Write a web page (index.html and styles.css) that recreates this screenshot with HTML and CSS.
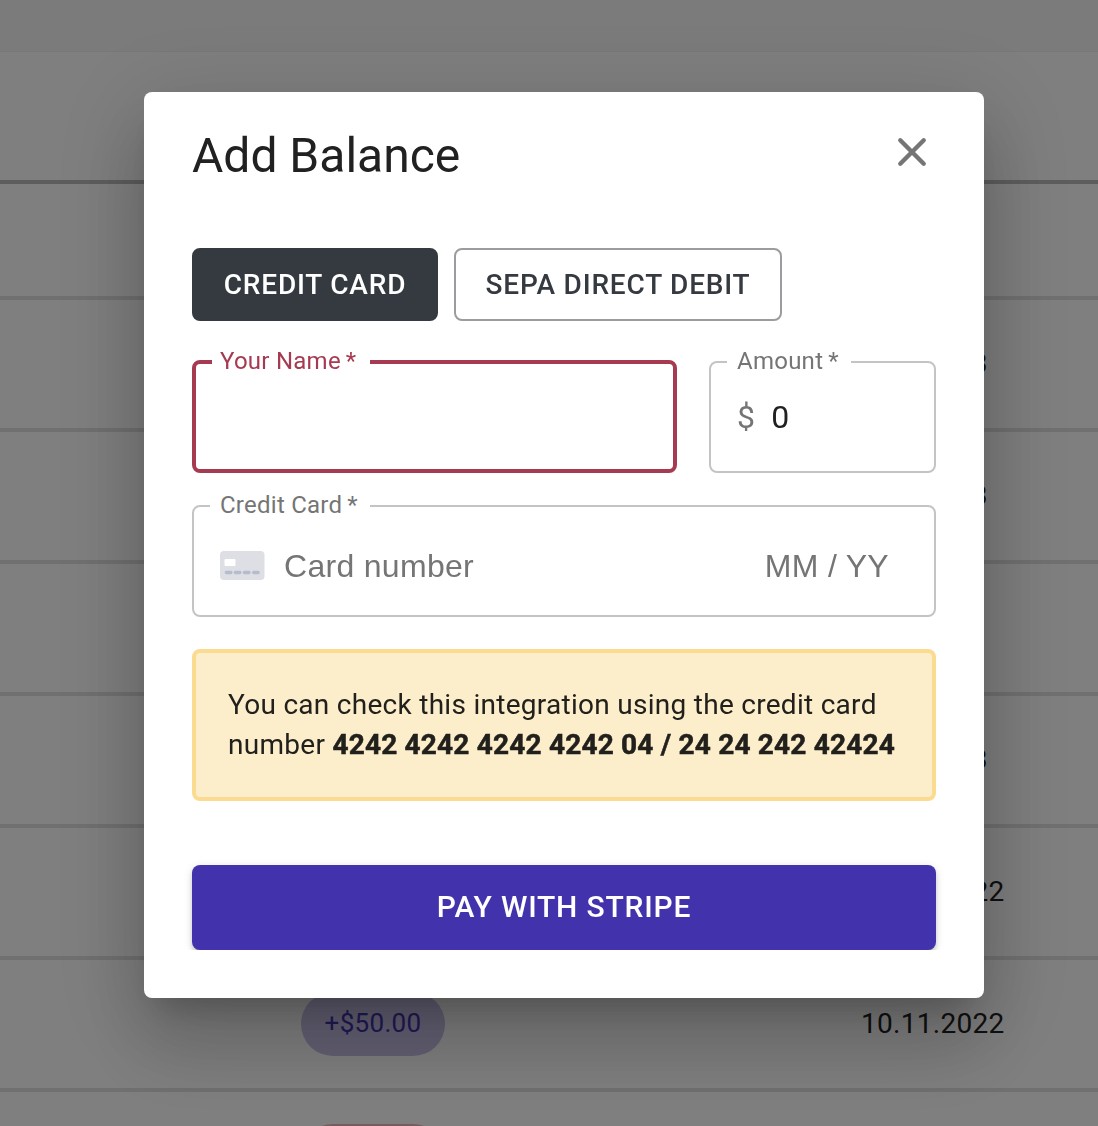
FILE: index.html
```html
<!DOCTYPE html>
<html lang="en">
<head>
  <meta charset="UTF-8">
  <title>Add Balance</title>
  <link rel="stylesheet" href="styles.css">
</head>
<body>
  <main class="page">
    <div class="topbar"></div>
    <div class="table">
      <div class="row row-head"></div>
      <div class="row row-first"></div>
      <div class="row"><span class="date date-strong">3</span></div>
      <div class="row"><span class="date date-strong">3</span></div>
      <div class="row"></div>
      <div class="row"><span class="date date-strong">3</span></div>
      <div class="row"><span class="date">10.11.2022</span></div>
      <div class="row"><span class="chip">+$50.00</span><span class="date">10.11.2022</span></div>
      <div class="row"><span class="chip chip-red"></span></div>
    </div>
  </main>

  <div class="backdrop">
    <section class="modal" role="dialog" aria-labelledby="title">
      <header class="modal-head">
        <h2 id="title">Add Balance</h2>
        <button class="close" type="button" aria-label="Close">
          <svg width="48" height="48" viewBox="0 0 48 48" fill="none" stroke="#757575" stroke-width="4.4" stroke-linecap="round">
            <path d="M12.3 12.3L35.7 35.7M35.7 12.3L12.3 35.7"/>
          </svg>
        </button>
      </header>

      <div class="tabs">
        <button class="tab tab-active" type="button">CREDIT CARD</button>
        <button class="tab" type="button">SEPA DIRECT DEBIT</button>
      </div>

      <form>
        <div class="fields">
          <div class="field field-name">
            <label class="label">Your Name<span class="star">*</span></label>
          </div>
          <div class="field field-amount">
            <label class="label">Amount<span class="star">*</span></label>
            <span class="currency">$</span>
            <span class="value">0</span>
          </div>
        </div>

        <div class="field field-card">
          <label class="label">Credit Card<span class="star">*</span></label>
          <svg class="card-icon" width="45" height="29" viewBox="0 0 45 29">
            <rect width="44.5" height="29" rx="4" fill="#dedfe5"/>
            <rect x="4.5" y="8" width="11" height="7" rx="1" fill="#fff"/>
            <g fill="#b5bccb">
              <rect x="4.7" y="19.8" width="7.8" height="3.4" rx="1.7"/>
              <rect x="13.7" y="19.8" width="7.8" height="3.4" rx="1.7"/>
              <rect x="22.8" y="19.8" width="7.8" height="3.4" rx="1.7"/>
              <rect x="32" y="19.8" width="7.8" height="3.4" rx="1.7"/>
            </g>
          </svg>
          <span class="card-number">Card number</span>
          <span class="card-date">MM / YY</span>
        </div>

        <p class="notice">You can check this integration using the credit card<br>number <strong>4242 4242 4242 4242 04 / 24 24 242 42424</strong></p>

        <div class="actions">
          <button class="pay" type="button">PAY WITH STRIPE</button>
        </div>
      </form>
    </section>
  </div>
</body>
</html>
```
FILE: styles.css
```css
* { box-sizing: border-box; }
body { margin: 0; height: 1126px; overflow: hidden; font-family: Roboto, "Liberation Sans", sans-serif; color: #212121; }
button { font-family: inherit; border: 0; padding: 0; }

/* page behind the dialog */
.page { height: 1126px; overflow: hidden; background: #fff; }
.topbar { height: 52px; background: #f6f6f6; border-bottom: 1px solid #f1f1f1; }
.row { display: grid; grid-template-columns: 560px 1fr; align-items: center; height: 132px; padding-left: 301px; border-bottom: 4px solid #e0e0e0; }
.row-head { border-color: #bbb; }
.row-first { height: 116px; }
.date { grid-column: 2; padding-bottom: 2px; font-size: 28px; letter-spacing: 0.3px; }
.date-strong { padding-left: 110px; font-weight: 700; }
.chip { display: flex; align-items: center; justify-content: center; width: 144px; height: 64px; padding-bottom: 2px; border-radius: 32px; background: #c8c0e8; color: #4233ad; font-size: 26px; letter-spacing: 0.3px; }
.chip-red { background: #edb9bd; }

.backdrop { position: fixed; inset: 0; padding: 92px 0 0 144px; background: rgba(0, 0, 0, 0.5); }
.modal {
  width: 840px;
  height: 906px;
  padding: 32px 48px 48px;
  border-radius: 8px;
  background: #fff;
  box-shadow: 0 22px 30px -14px rgba(0, 0, 0, 0.2), 0 48px 76px 6px rgba(0, 0, 0, 0.14), 0 18px 92px 16px rgba(0, 0, 0, 0.12);
}
.modal-head { display: flex; justify-content: space-between; height: 124px; }
.modal-head h2 { margin: 0; font-size: 48px; font-weight: 400; line-height: 64px; }
.close { width: 48px; height: 48px; margin: 4px 0 0; background: none; }
.close svg { display: block; }

.tabs { display: flex; gap: 16px; height: 73px; margin-bottom: 40px; }
.tab { width: 328px; border: 2px solid #9b9ba0; border-radius: 8px; background: #fff; color: #353940; font-size: 28px; font-weight: 500; letter-spacing: 0.8px; }
.tab-active { width: 246px; border-color: #353940; background: #353940; color: #fff; }

.fields { display: flex; gap: 32px; margin-bottom: 32px; }
.field { position: relative; display: flex; align-items: center; height: 112px; border: 2px solid #c4c4c4; border-radius: 8px; }
.field-name { width: 485px; height: 113px; margin-top: -1px; border: 4px solid #a63a50; }
.field-amount { width: 227px; padding-left: 26px; }
.field-card { padding: 9px 45px 0 26px; }
/* the label cuts a gap into the top border */
.label { position: absolute; top: -16px; left: 16px; width: 160px; padding-left: 10px; background: #fff; color: #757575; font-size: 24px; line-height: 28px; letter-spacing: 0.25px; white-space: nowrap; }
.field-name .label { width: 158px; padding-left: 8px; top: -17px; color: #a63a50; }
.field-amount .label { width: 124px; }
.star { margin-left: 5px; }
.currency { color: #757575; font-size: 32px; letter-spacing: 0.3px; }
.value { margin-left: 16px; font-size: 32px; }
.card-icon { margin-top: -1px; }
.card-number, .card-date { color: #757575; font-family: "Liberation Sans", sans-serif; font-size: 32px; line-height: 38px; letter-spacing: 0.3px; }
.card-number { margin-left: 19px; }
.card-date { margin-left: auto; }

.notice { height: 152px; margin: 32px 0 64px; padding: 32px; border: 4px solid #fbdb8f; border-radius: 8px; background: #fceecb; color: #21201c; font-size: 28px; line-height: 40px; letter-spacing: 0.28px; white-space: nowrap; }
.notice strong { font-weight: 700; letter-spacing: 0.19px; -webkit-text-stroke: 0.5px; }

/* keeps the button shadow from showing under the button */
.actions { clip-path: inset(-10px -10px 0); }
.pay { display: block; width: 100%; height: 85px; padding-bottom: 2px; border-radius: 8px; background: #4233ad; color: #fff; font-size: 30px; font-weight: 500; letter-spacing: 0.8px; box-shadow: 0 6px 2px -4px rgba(0, 0, 0, 0.2), 0 4px 4px rgba(0, 0, 0, 0.14), 0 2px 10px rgba(0, 0, 0, 0.12); }
```
